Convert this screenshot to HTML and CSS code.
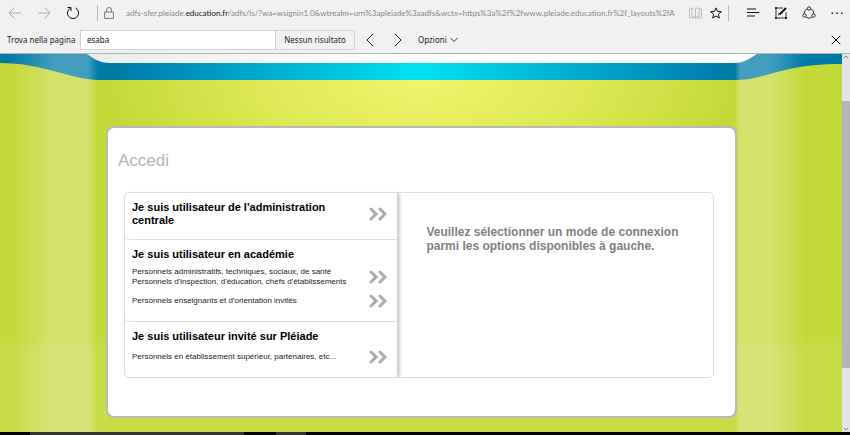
FILE: index.html
```html
<!DOCTYPE html>
<html lang="it">
<head>
    <meta charset="UTF-8">
    <meta name="viewport" content="width=device-width, initial-scale=1.0">
    <title>Accedi</title>
    <link rel="stylesheet" href="styles.css">
</head>
<body>
    <header class="browser">
        <div class="toolbar">
            <button type="button" class="icon-button faded" aria-label="Indietro">
                <svg width="14" height="14" viewBox="0 0 14 14"><path d="M13 7H1M6.500 1.500L1 7l5.500 5.500"/></svg>
            </button>
            <button type="button" class="icon-button faded" aria-label="Avanti">
                <svg width="14" height="14" viewBox="0 0 14 14"><path d="M1 7h12M7.500 1.500L13 7l-5.500 5.500"/></svg>
            </button>
            <button type="button" class="icon-button" aria-label="Aggiorna">
                <svg width="14" height="14" viewBox="0 0 14 14"><path class="bold" d="M4.500 2A5.600 5.600 0 1 0 9.500 2M1.500 1.500H5v3.500"/></svg>
            </button>
            <div class="address">
                <svg class="lock" width="10" height="12" viewBox="0 0 10 12"><path d="M.6 5h8.800v6.400H.6zM2.500 5V3a2.500 2.500 0 0 1 5 0v2"/></svg>
                <span class="url">adfs-sfer.pleiade.<span class="domain">education.fr</span>/adfs/ls/?wa=wsignin1.0&amp;wtrealm=urn%3apleiade%3aadfs&amp;wctx=https%3a%2f%2fwww.pleiade.education.fr%2f_layouts%2fA</span>
                <button type="button" class="icon-button pale" aria-label="Visualizzazione lettura">
                    <svg width="13" height="12" viewBox="0 0 13 12"><path d="M6.500 2v9M6.500 2C5.500 1 4 1 3 1v8.500c1.500 0 2.500.2 3.500 1.500C7.500 9.700 8.500 9.500 10 9.500V1C9 1 7.500 1 6.500 2M3 2H.6v9h11.800V2H10"/></svg>
                </button>
                <button type="button" class="icon-button" aria-label="Preferiti">
                    <svg width="12" height="12" viewBox="0 0 12 12"><path class="bold" d="M6 .9l1.500 3.500 3.900.3-3 2.500.9 3.900L6 9l-3.300 2.100.9-3.900-3-2.500 3.900-.3z"/></svg>
                </button>
            </div>
            <div class="tools">
                <button type="button" class="icon-button" aria-label="Hub">
                    <svg width="14" height="12" viewBox="0 0 14 12"><path class="bold" d="M1 2h9M1 5.500h12M1 9h8"/></svg>
                </button>
                <button type="button" class="icon-button" aria-label="Nota Web">
                    <svg width="14" height="14" viewBox="0 0 14 14"><path d="M9 2H2v10h10V6M4.500 9.500L5.300 7"/><path class="pen" d="M5.500 8.500L12 2"/><path class="dot" d="M1 1h2v2H1zM1 11h2v2H1zM11 11h2v2h-2z"/></svg>
                </button>
                <button type="button" class="icon-button" aria-label="Condividi">
                    <svg width="14" height="14" viewBox="0 0 14 14"><circle cx="7" cy="2.500" r="1.700"/><circle cx="2.500" cy="9.500" r="1.700"/><circle cx="11.500" cy="9.500" r="1.700"/><path d="M5.300 2.800A5 5 0 0 0 2.200 7.800M8.700 2.800a5 5 0 0 1 3.100 5M3.800 11a5 5 0 0 0 6.400 0"/></svg>
                </button>
                <button type="button" class="icon-button" aria-label="Altro">
                    <svg width="14" height="12" viewBox="0 0 14 12"><path class="dot" d="M1.500 5.500h1.500v1.500H1.500zM6.200 5.500h1.500v1.500H6.200zM11 5.500h1.500v1.500H11z"/></svg>
                </button>
            </div>
        </div>
        <form class="find-bar">
            <label for="find">Trova nella pagina</label>
            <input type="text" id="find" name="find" value="esaba">
            <output class="result" for="find">Nessun risultato</output>
            <button type="button" class="icon-button" aria-label="Precedente">
                <svg width="8" height="14" viewBox="0 0 8 14"><path class="bold" d="M7 1L1 7l6 6"/></svg>
            </button>
            <button type="button" class="icon-button" aria-label="Successivo">
                <svg width="8" height="14" viewBox="0 0 8 14"><path class="bold" d="M1 1l6 6-6 6"/></svg>
            </button>
            <button type="button" class="options">Opzioni
                <svg width="8" height="6" viewBox="0 0 8 6"><path d="M.5 1L4 4.500 7.500 1"/></svg>
            </button>
            <button type="button" class="icon-button close" aria-label="Chiudi">
                <svg width="10" height="10" viewBox="0 0 10 10"><path class="bold" d="M.7.700l8.600 8.600M9.300.700L.7 9.300"/></svg>
            </button>
        </form>
    </header>

    <div class="viewport">
        <main class="page">
            <svg class="backdrop" viewBox="0 0 842 378" preserveAspectRatio="none" aria-hidden="true">
                <defs>
                    <radialGradient id="glow" gradientUnits="userSpaceOnUse" cx="421" cy="20" r="320" gradientTransform="translate(0 12) scale(1 .5)">
                        <stop offset="0" stop-color="#f1f66c"/>
                        <stop offset=".5" stop-color="#dfe955"/>
                        <stop offset="1" stop-color="#c3d938"/>
                    </radialGradient>
                    <linearGradient id="ribbon">
                        <stop offset="0" stop-color="#007ba8"/>
                        <stop offset=".14" stop-color="#007ba8"/>
                        <stop offset=".5" stop-color="#00e1f4"/>
                        <stop offset=".86" stop-color="#007ba8"/>
                        <stop offset="1" stop-color="#007ba8"/>
                    </linearGradient>
                    <linearGradient id="beam-left">
                        <stop offset="0" stop-color="#fff" stop-opacity="0"/>
                        <stop offset=".5" stop-color="#fff" stop-opacity=".26"/>
                        <stop offset=".88" stop-color="#fff" stop-opacity=".26"/>
                        <stop offset="1" stop-color="#fff" stop-opacity="0"/>
                    </linearGradient>
                    <linearGradient id="beam-right" x1="1" x2="0">
                        <stop offset="0" stop-color="#fff" stop-opacity="0"/>
                        <stop offset=".5" stop-color="#fff" stop-opacity=".26"/>
                        <stop offset=".93" stop-color="#fff" stop-opacity=".26"/>
                        <stop offset="1" stop-color="#fff" stop-opacity="0"/>
                    </linearGradient>
                    <linearGradient id="top">
                        <stop offset="0" stop-color="#ececec"/>
                        <stop offset=".5" stop-color="#fff"/>
                    </linearGradient>
                    <linearGradient id="floor" x2="0" y2="1">
                        <stop offset="0" stop-color="#fff" stop-opacity="0"/>
                        <stop offset=".15" stop-color="#fff" stop-opacity=".08"/>
                    </linearGradient>
                </defs>
                <path fill="url(#glow)" d="M0 0h842v378H0z"/>
                <path fill="url(#ribbon)" d="M0 0h842v10C780 10 765 26 737 26H100C70 26 45 9 0 9z"/>
                <path fill="url(#top)" d="M87 0H757C748 6 742 9 734 9H110C101 9 95 6 87 0z"/>
                <path fill="url(#beam-left)" d="M10 0H87Q93 5 98 7V378H10z"/>
                <path fill="url(#beam-right)" d="M735 9Q747 7 757 0H806V378H735z"/>
                <path fill="url(#floor)" d="M0 282h842v96H0z"/>
            </svg>
            <section class="card">
                <h1>Accedi</h1>
                <div class="choices">
                    <div class="profiles">
                        <section class="profile">
                            <a class="entry" href="#">
                                <h2>Je suis utilisateur de l'administration centrale</h2>
                                <svg class="arrows" width="18" height="14" viewBox="0 0 18 14"><path d="M2 2l5 5-5 5M11 2l5 5-5 5"/></svg>
                            </a>
                        </section>
                        <section class="profile">
                            <h2>Je suis utilisateur en académie</h2>
                            <a class="entry" href="#">
                                <span>Personnels administratifs, techniques, sociaux, de santé<br>Personnels d'inspection, d'éducation, chefs d'établissements</span>
                                <svg class="arrows" width="18" height="14" viewBox="0 0 18 14"><path d="M2 2l5 5-5 5M11 2l5 5-5 5"/></svg>
                            </a>
                            <a class="entry" href="#">
                                <span>Personnels enseignants et d'orientation invités</span>
                                <svg class="arrows" width="18" height="14" viewBox="0 0 18 14"><path d="M2 2l5 5-5 5M11 2l5 5-5 5"/></svg>
                            </a>
                        </section>
                        <section class="profile">
                            <h2>Je suis utilisateur invité sur Pléiade</h2>
                            <a class="entry" href="#">
                                <span>Personnels en établissement supérieur, partenaires, etc...</span>
                                <svg class="arrows" width="18" height="14" viewBox="0 0 18 14"><path d="M2 2l5 5-5 5M11 2l5 5-5 5"/></svg>
                            </a>
                        </section>
                    </div>
                    <p class="hint">Veuillez sélectionner un mode de connexion parmi les options disponibles à gauche.</p>
                </div>
            </section>
        </main>
        <div class="scrollbar">
            <svg width="6" height="6" viewBox="0 0 6 6"><path d="M1 4l2-2 2 2"/></svg>
            <div class="track"><div class="thumb"></div></div>
            <svg width="6" height="6" viewBox="0 0 6 6"><path d="M1 2l2 2 2-2"/></svg>
        </div>
    </div>
    <footer class="taskbar"></footer>
</body>
</html>
```
FILE: styles.css
```css
* {
    box-sizing: border-box;
}
body {
    margin: 0;
    height: 100vh;
    display: flex;
    flex-direction: column;
    overflow: hidden;
    font-family: "Liberation Sans", Arial, sans-serif;
}
h1,
h2,
p {
    margin: 0;
}
button {
    padding: 0;
    border: none;
    background: none;
    font: inherit;
    color: inherit;
}

/* browser bars */
.browser {
    background-color: #f1f1f1;
    border-bottom: 1px solid #b4b4b4;
    font-family: "Noto Sans", sans-serif;
    font-size: 8px;
    color: #222;
}
.browser svg {
    display: block;
    fill: none;
    stroke: #333;
}
.browser .bold {
    stroke: #111;
}
.browser .pen {
    stroke: #111;
    stroke-width: 2;
}
.browser .dot {
    fill: #222;
    stroke: none;
}
.browser .faded svg {
    stroke: #aaa;
}
.browser .pale svg {
    stroke: #bbb;
}
.toolbar {
    display: flex;
    align-items: center;
    gap: 15px;
    height: 26px;
    padding: 0 6px 0 8px;
}
.address {
    flex: 1;
    min-width: 0;
    height: 16px;
    display: flex;
    align-items: center;
    gap: 8px;
    padding: 0 6px;
    border: solid #bbb;
    border-width: 0 1px;
    margin-left: 2px;
}
.address .lock {
    flex: none;
    margin-right: 4px;
    stroke: #777;
}
.url {
    flex: 1;
    min-width: 0;
    overflow: hidden;
    white-space: nowrap;
    font-family: Lato, "Noto Sans", sans-serif;
    color: #888;
}
.domain {
    color: #111;
}
.tools {
    display: flex;
    align-items: center;
    gap: 14px;
    margin-left: 2px;
}
.find-bar {
    display: flex;
    align-items: center;
    height: 27px;
    padding: 0 9px 0 7px;
}
.find-bar label {
    width: 73px;
    white-space: nowrap;
}
.find-bar input {
    width: 196px;
    height: 20px;
    padding: 0 6px;
    border: 1px solid #d2d2d2;
    border-radius: 0;
    background-color: #fff;
    font: inherit;
    color: inherit;
}
.result {
    width: 79px;
    height: 20px;
    line-height: 18px;
    border: 1px solid #d2d2d2;
    border-left: none;
    text-align: center;
    white-space: nowrap;
    margin-right: 11px;
}
.find-bar .icon-button {
    margin-right: 20px;
}
.find-bar .options {
    display: flex;
    align-items: center;
    gap: 3px;
    margin-left: -4px;
}
.find-bar .close {
    margin: 0 0 0 auto;
}

/* page */
.viewport {
    flex: 1;
    min-height: 0;
    display: flex;
}
.page {
    flex: 1;
    position: relative;
    background-color: #c3d938;
    padding: 72px 105px 14px 106px;
}
.backdrop {
    position: absolute;
    top: 0;
    left: 0;
    width: 100%;
    height: 100%;
}
.card {
    position: relative;
    height: 100%;
    padding: 23px 21px 36px 16px;
    background-color: #fff;
    border: 2px solid #b8b8b8;
    border-radius: 8px;
}
.card h1 {
    margin-left: -6px;
    font-size: 17px;
    line-height: 20px;
    font-weight: normal;
    color: #b5b5b5;
}
.choices {
    display: flex;
    margin-top: 21px;
    border: 1px solid #ddd;
    border-radius: 5px;
}
.profiles {
    flex: none;
    width: 46.5%;
    border-right: 1px solid #ccc;
    box-shadow: 3px 0 3px -1px #ccc;
}
.profile {
    padding: 8px 10px 12px 7px;
    border-bottom: 1px solid #ddd;
    border-radius: 5px 0 0 5px;
    background-color: #fff;
}
.profile:last-child {
    border-bottom: none;
}
.profile h2 {
    max-width: 220px;
    font-size: 11px;
    line-height: 13px;
    color: #000;
}
.entry {
    display: flex;
    align-items: center;
    justify-content: space-between;
    min-height: 16px;
    font-size: 8px;
    line-height: 10px;
    color: #222;
    text-decoration: none;
}
h2 + .entry {
    margin-top: 6px;
}
.entry + .entry {
    margin-top: 6px;
}
.arrows {
    flex: none;
    fill: none;
    stroke: #aaa;
    stroke-width: 3;
    stroke-linecap: round;
}
.hint {
    flex: 1;
    padding: 32px 20px 0 28px;
    font-size: 12px;
    line-height: 14px;
    font-weight: bold;
    color: #808080;
}

.scrollbar {
    width: 8px;
    display: flex;
    flex-direction: column;
    align-items: center;
    background-color: #e4e4e4;
}
.scrollbar svg {
    fill: none;
    stroke: #888;
}
.track {
    flex: 1;
    align-self: stretch;
}
.thumb {
    height: 73%;
    margin-top: 41px;
    background-color: #b5b5b5;
}
.taskbar {
    height: 3px;
    background: linear-gradient(90deg, #050505 30px, #333 30px, #333 244px, #050505 244px, #050505 276px, #333 276px, #333 306px, #050505 306px);
}
```
